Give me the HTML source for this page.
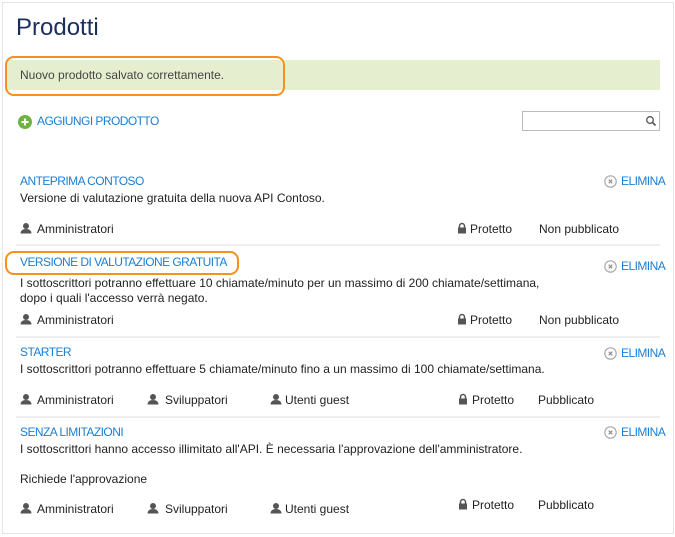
<!DOCTYPE html>
<html><head><meta charset="utf-8"><style>
*{margin:0;padding:0;box-sizing:border-box}
body{width:675px;height:537px;background:#fff;font-family:"Liberation Sans",sans-serif;font-size:12px;color:#222;position:relative;overflow:hidden}
.a{position:absolute;white-space:nowrap;line-height:14px}
.frame{position:absolute;left:2px;top:2px;width:672px;height:532px;border:1px solid #e4e4e4}
.blue{color:#1a7fd4;letter-spacing:-0.55px}
.sep{position:absolute;left:16px;width:644px;height:2px;background:#eeeeee}
.ring{position:absolute;border:2.5px solid #f7901e;border-radius:9px}
</style></head><body>
<div class="frame"></div>
<div class="a" style="left:16px;top:14px;font-size:24px;line-height:28px;color:#1b2f5e">Prodotti</div>
<div style="position:absolute;left:6px;top:60px;width:654px;height:30px;background:#e5efcf"></div>
<div class="a" style="left:20px;top:68px;color:#444">Nuovo prodotto salvato correttamente.</div>
<div class="ring" style="left:5px;top:56px;width:280px;height:40px"></div>
<svg style="position:absolute;left:18px;top:115px" width="14" height="14"><circle cx="7" cy="7" r="7" fill="#6db33f"/><path d="M7 3.5v7M3.5 7h7" stroke="#fff" stroke-width="2"/></svg>
<div class="a blue" style="left:37px;top:114px">AGGIUNGI PRODOTTO</div>
<div style="position:absolute;left:522px;top:111px;width:138px;height:20px;border:1px solid #bbb"></div>
<svg style="position:absolute;left:645px;top:115px" width="12" height="12"><circle cx="5" cy="5" r="3.3" fill="none" stroke="#555" stroke-width="1.3"/><path d="M7.5 7.5l3 3" stroke="#555" stroke-width="1.6"/></svg>

<svg width="0" height="0" style="position:absolute"><defs>
<symbol id="u" viewBox="0 0 12 12"><circle cx="6" cy="4" r="3" fill="#555"/><path d="M0.5 11.5c0-3 2.5-4.5 5.5-4.5s5.5 1.5 5.5 4.5z" fill="#555"/></symbol>
<symbol id="l" viewBox="0 0 10 12"><path d="M2.5 6V4a2.5 2.5 0 0 1 5 0v2" fill="none" stroke="#555" stroke-width="1.5"/><rect x="1" y="5.5" width="8" height="6" fill="#555"/></symbol>
<symbol id="x" viewBox="0 0 13 13"><circle cx="6.5" cy="6.5" r="5.7" fill="none" stroke="#aaa" stroke-width="1.2"/><path d="M4.7 4.7l3.6 3.6M8.3 4.7l-3.6 3.6" stroke="#888" stroke-width="1.1"/></symbol>
</defs></svg>

<!-- item 1 -->
<div class="a blue" style="left:20px;top:174px">ANTEPRIMA CONTOSO</div>
<svg style="position:absolute;left:604px;top:175px" width="13" height="13"><use href="#x"/></svg>
<div class="a blue" style="left:621px;top:174px">ELIMINA</div>
<div class="a" style="left:20px;top:191px">Versione di valutazione gratuita della nuova API Contoso.</div>
<svg style="position:absolute;left:20px;top:222px" width="12" height="12"><use href="#u"/></svg>
<div class="a" style="left:37px;top:222px">Amministratori</div>
<svg style="position:absolute;left:457px;top:222px" width="10" height="12"><use href="#l"/></svg>
<div class="a" style="left:470px;top:222px">Protetto</div>
<div class="a" style="left:539px;top:222px">Non pubblicato</div>
<div class="sep" style="top:244px"></div>

<!-- item 2 -->
<div class="a blue" style="left:20px;top:255px">VERSIONE DI VALUTAZIONE GRATUITA</div>
<div class="ring" style="left:5px;top:251px;width:234px;height:24px"></div>
<svg style="position:absolute;left:604px;top:260px" width="13" height="13"><use href="#x"/></svg>
<div class="a blue" style="left:621px;top:259px">ELIMINA</div>
<div class="a" style="left:20px;top:276px">I sottoscrittori potranno effettuare 10 chiamate/minuto per un massimo di 200 chiamate/settimana,</div>
<div class="a" style="left:20px;top:291px">dopo i quali l'accesso verrà negato.</div>
<svg style="position:absolute;left:20px;top:313px" width="12" height="12"><use href="#u"/></svg>
<div class="a" style="left:37px;top:313px">Amministratori</div>
<svg style="position:absolute;left:457px;top:313px" width="10" height="12"><use href="#l"/></svg>
<div class="a" style="left:470px;top:313px">Protetto</div>
<div class="a" style="left:539px;top:313px">Non pubblicato</div>
<div class="sep" style="top:336px"></div>

<!-- item 3 -->
<div class="a blue" style="left:20px;top:345px">STARTER</div>
<svg style="position:absolute;left:604px;top:347px" width="13" height="13"><use href="#x"/></svg>
<div class="a blue" style="left:621px;top:346px">ELIMINA</div>
<div class="a" style="left:20px;top:362px">I sottoscrittori potranno effettuare 5 chiamate/minuto fino a un massimo di 100 chiamate/settimana.</div>
<svg style="position:absolute;left:20px;top:393px" width="12" height="12"><use href="#u"/></svg>
<div class="a" style="left:37px;top:393px">Amministratori</div>
<svg style="position:absolute;left:147px;top:393px" width="12" height="12"><use href="#u"/></svg>
<div class="a" style="left:165px;top:393px">Sviluppatori</div>
<svg style="position:absolute;left:270px;top:393px" width="12" height="12"><use href="#u"/></svg>
<div class="a" style="left:285px;top:393px">Utenti guest</div>
<svg style="position:absolute;left:458px;top:393px" width="10" height="12"><use href="#l"/></svg>
<div class="a" style="left:472px;top:393px">Protetto</div>
<div class="a" style="left:538px;top:393px">Pubblicato</div>
<div class="sep" style="top:416px"></div>

<!-- item 4 -->
<div class="a blue" style="left:20px;top:425px">SENZA LIMITAZIONI</div>
<svg style="position:absolute;left:604px;top:426px" width="13" height="13"><use href="#x"/></svg>
<div class="a blue" style="left:621px;top:425px">ELIMINA</div>
<div class="a" style="left:20px;top:442px">I sottoscrittori hanno accesso illimitato all'API. È necessaria l'approvazione dell'amministratore.</div>
<div class="a" style="left:20px;top:472px">Richiede l'approvazione</div>
<svg style="position:absolute;left:20px;top:502px" width="12" height="12"><use href="#u"/></svg>
<div class="a" style="left:37px;top:502px">Amministratori</div>
<svg style="position:absolute;left:147px;top:502px" width="12" height="12"><use href="#u"/></svg>
<div class="a" style="left:165px;top:502px">Sviluppatori</div>
<svg style="position:absolute;left:270px;top:502px" width="12" height="12"><use href="#u"/></svg>
<div class="a" style="left:285px;top:502px">Utenti guest</div>
<svg style="position:absolute;left:458px;top:498px" width="10" height="12"><use href="#l"/></svg>
<div class="a" style="left:472px;top:498px">Protetto</div>
<div class="a" style="left:538px;top:498px">Pubblicato</div>
</body></html>
